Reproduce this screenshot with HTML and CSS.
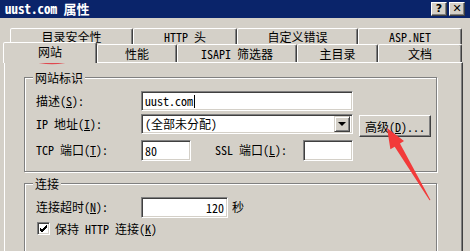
FILE: index.html
```html
<!DOCTYPE html>
<html lang="zh-CN">
<head>
    <meta charset="UTF-8">
    <title>uust.com 属性</title>
    <link rel="stylesheet" href="styles.css">
</head>
<body>

    <div class="window">
        <div class="titlebar">
            <span class="title">uust.com 属性</span>
            <div class="title-buttons">
                <span class="cap-btn">?</span>
                <span class="cap-btn">&#x2715;</span>
            </div>
        </div>

        <div class="tabs">
            <div class="tab-row back">
                <div class="tab" style="width: 123px;">目录安全性</div>
                <div class="tab" style="width: 104px;">HTTP 头</div>
                <div class="tab" style="width: 121px;">自定义错误</div>
                <div class="tab" style="width: 104px;">ASP.NET</div>
            </div>
            <div class="tab-row front">
                <div class="tab active" style="width: 94px;">网站</div>
                <div class="tab" style="width: 80px;">性能</div>
                <div class="tab" style="width: 120px;">ISAPI 筛选器</div>
                <div class="tab" style="width: 81px;">主目录</div>
                <div class="tab" style="width: 84px;">文档</div>
            </div>
        </div>

        <div class="page">
            <div class="group">
                <div class="group-title">网站标识</div>

                <div class="row">
                    <label class="label">描述(<u>S</u>):</label>
                    <div class="field wide"><span>uust.com</span><span class="caret"></span></div>
                </div>

                <div class="row">
                    <label class="label">IP 地址(<u>I</u>):</label>
                    <div class="field wide select">
                        <span>(全部未分配)</span>
                        <span class="drop-btn"><span class="arrow"></span></span>
                    </div>
                    <button class="btn">高级(<u>D</u>)...</button>
                </div>

                <div class="row">
                    <label class="label">TCP 端口(<u>T</u>):</label>
                    <div class="field small">80</div>
                    <label class="label ssl">SSL 端口(<u>L</u>):</label>
                    <div class="field small"></div>
                </div>
            </div>

            <div class="group second">
                <div class="group-title">连接</div>

                <div class="row">
                    <label class="label">连接超时(<u>N</u>):</label>
                    <div class="field timeout">120</div>
                    <span class="unit">秒</span>
                </div>

                <div class="row check-row">
                    <span class="checkbox">
                        <svg width="9" height="9" viewBox="0 0 9 9"><path d="M1 4 L3 6 L8 1 M1 5 L3 7 L8 2 M1 6 L3 8 L8 3" stroke="#000" stroke-width="1" fill="none"/></svg>
                    </span>
                    <span>保持 HTTP 连接(<u>K</u>)</span>
                </div>
            </div>
        </div>

        <!-- red marks drawn over the screenshot -->
        <svg class="marks" width="470" height="251" viewBox="0 0 470 251">
            <ellipse cx="52" cy="54" rx="30" ry="9.5" fill="none" stroke="#e0484f" stroke-width="1.3"/>
            <polygon points="387,128 404,141 400,143.6 430.5,200 429.5,200.3 394.7,146.7 390.4,149.3" fill="#f23a3a"/>
        </svg>
    </div>

</body>
</html>
```

FILE: styles.css
```css
body {
    margin: 0;
    padding: 0;
    background: #d4d0c8;
    font-family: "Noto Sans Mono CJK SC", "Noto Sans CJK SC", sans-serif;
    font-size: 12px;
    color: #000;
}

.window {
    position: relative;
    width: 470px;
    height: 251px;
    overflow: hidden;
    background: #d4d0c8;
}

.titlebar {
    height: 18px;
    background: #0a246a;
    display: flex;
    align-items: center;
    padding: 0 5px;
}

.title {
    color: #fff;
    font-weight: bold;
    font-size: 13px;
    line-height: 14px;
}

.title-buttons {
    margin-left: auto;
    display: flex;
    gap: 2px;
}

.cap-btn {
    width: 14px;
    height: 12px;
    background: #d4d0c8;
    border: 1px solid;
    border-color: #fff #404040 #404040 #fff;
    box-shadow: inset -1px -1px #808080;
    font-size: 11px;
    font-weight: bold;
    line-height: 12px;
    text-align: center;
    font-family: "DejaVu Sans", sans-serif;
}

.tabs {
    padding-top: 10px;
}

.tab-row {
    display: flex;
    align-items: flex-end;
}

.tab-row.back {
    height: 16px;
    padding-left: 10px;
}

.tab-row.front {
    height: 18px;
    padding-left: 3px;
}

.tab {
    box-sizing: border-box;
    height: 100%;
    border: 1px solid;
    border-bottom: none;
    border-color: #fff #404040 transparent #fff;
    box-shadow: inset -1px 0 #808080;
    border-radius: 2px 2px 0 0;
    display: flex;
    align-items: center;
    justify-content: center;
    line-height: 14px;
    background: #d4d0c8;
}

.tab-row.front .tab {
    padding-top: 1px;
}

.tab.active {
    position: relative;
    z-index: 1;
    height: 21px;
    margin-bottom: -1px;
    padding-bottom: 3px;
}

.page {
    width: 459px;
    height: 200px;
    margin-left: 4px;
    box-sizing: border-box;
    border: 1px solid;
    border-color: #fff #404040 #404040 #fff;
    box-shadow: inset -1px 0 #808080;
    padding: 14px 0 0 19px;
}

.group {
    width: 413px;
    box-sizing: border-box;
    border: 1px solid #808080;
    box-shadow: inset 1px 1px #fff, 1px 1px #fff;
    padding: 0 0 10px 11px;
}

.group.second {
    margin-top: 11px;
    padding-bottom: 40px;
}

.group-title {
    display: table;
    margin: -7px 0 0 -3px;
    padding: 0 2px;
    height: 14px;
    line-height: 14px;
    background: #d4d0c8;
}

.row {
    display: flex;
    align-items: flex-start;
    height: 20px;
    margin-top: 3px;
}

.group-title + .row {
    margin-top: 6px;
}

.group .row:nth-child(4) {
    margin-top: 6px;
    height: 21px;
}

.label {
    width: 105px;
    line-height: 20px;
    flex-shrink: 0;
}

.label.ssl {
    width: 88px;
    margin-left: 24px;
}

.field {
    box-sizing: border-box;
    height: 100%;
    background: #fff;
    border: 1px solid;
    border-color: #808080 #fff #fff #808080;
    box-shadow: inset 1px 1px #404040, inset -1px -1px #d4d0c8;
    padding: 0 3px;
    line-height: 18px;
    display: flex;
    align-items: center;
}

.field.wide {
    width: 212px;
}

.field.small {
    width: 50px;
}

.field.timeout {
    width: 87px;
    justify-content: flex-end;
    height: 21px;
}

.caret {
    width: 1px;
    height: 13px;
    background: #000;
    margin-left: 1px;
}

.select {
    padding-right: 2px;
}

.drop-btn {
    margin-left: auto;
    width: 16px;
    height: 16px;
    box-sizing: border-box;
    background: #d4d0c8;
    border: 1px solid;
    border-color: #d4d0c8 #404040 #404040 #d4d0c8;
    box-shadow: inset 1px 1px #fff, inset -1px -1px #808080;
    display: flex;
    align-items: center;
    justify-content: center;
}

.arrow {
    width: 0;
    height: 0;
    border-left: 4px solid transparent;
    border-right: 4px solid transparent;
    border-top: 4px solid #000;
}

.btn {
    box-sizing: border-box;
    width: 72px;
    height: 22px;
    margin: 1px 0 0 6px;
    padding: 0;
    background: #d4d0c8;
    border: 1px solid;
    border-color: #fff #404040 #404040 #fff;
    box-shadow: inset -1px -1px #808080;
    font: inherit;
    color: #000;
}

.unit {
    margin-left: 4px;
    line-height: 20px;
}

.check-row {
    align-items: center;
    height: 16px;
    margin-top: 3px;
    padding-left: 1px;
}

.checkbox {
    box-sizing: border-box;
    width: 13px;
    height: 13px;
    margin-right: 5px;
    background: #fff;
    border: 1px solid;
    border-color: #808080 #fff #fff #808080;
    box-shadow: inset 1px 1px #404040, inset -1px -1px #d4d0c8;
    display: flex;
    align-items: center;
    justify-content: center;
}

.marks {
    position: absolute;
    left: 0;
    top: 0;
    pointer-events: none;
}
```
